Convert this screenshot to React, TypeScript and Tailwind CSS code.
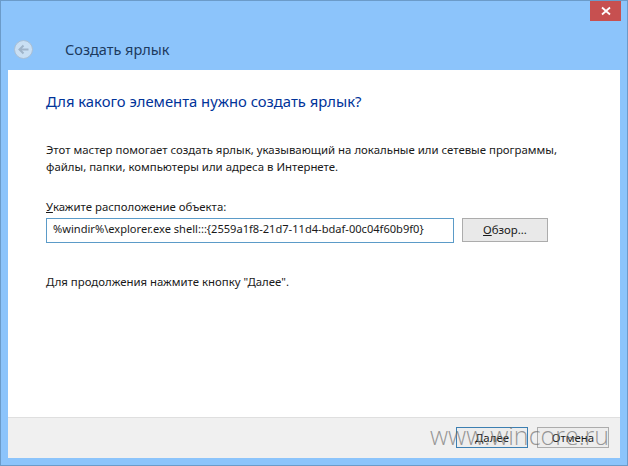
export default function App() {
  const font = { fontFamily: '"Noto Sans", "Open Sans", sans-serif' };
  return (
    <div style={font} className="relative w-[628px] h-[466px] overflow-hidden bg-[#8cc4fb] border border-[#6b9bc9] flex flex-col">
      <div className="flex justify-end h-[20px] pr-[6px]">
        <div className="w-[31px] h-[20px] bg-[#c75050] flex items-center justify-center">
          <svg width="10" height="10" viewBox="0 0 10 10"><path d="M1 1.5 L9 8.5 M9 1.5 L1 8.5" stroke="#fff" strokeWidth="1.8" /></svg>
        </div>
      </div>
      <div className="h-[49px] flex items-center pl-[13px] pt-[7px]">
        <svg width="19" height="19" viewBox="0 0 19 19">
          <circle cx="9.5" cy="9.5" r="9" fill="#c9dff3" stroke="#a9bfd4" />
          <path d="M14.5 9.5 H6 M9.5 5.5 L5.5 9.5 L9.5 13.5" fill="none" stroke="#9fb4c9" strokeWidth="2" />
        </svg>
        <span className="ml-[32px] text-[14.5px] leading-[20px] text-[#1c3a5e]">Создать ярлык</span>
      </div>
      <div className="mx-[7px] flex-1 bg-white flex flex-col min-h-0">
        <div className="flex-1 pl-[38px] pt-[20px] border-b border-[#dfdfdf]">
          <h1 className="text-[14.8px] leading-[22px] font-normal text-[#003399]">Для какого элемента нужно создать ярлык?</h1>
          <p className="mt-[29px] text-[11.4px] leading-[17px] text-[#1a1a1a] w-[530px]">
            Этот мастер помогает создать ярлык, указывающий на локальные или сетевые программы, файлы, папки, компьютеры или адреса в Интернете.
          </p>
          <p className="mt-[24px] text-[11.4px] leading-[16px] text-[#1a1a1a]">
            <span className="underline">У</span>кажите расположение объекта:
          </p>
          <div className="mt-[3px] flex items-start gap-[8px]">
            <div className="w-[408px] h-[25px] border border-[#5b9bc8] pl-[6px] pb-[3px] flex items-center text-[11.1px] text-[#1a1a1a] whitespace-nowrap">
              %windir%\explorer.exe shell:::{"{"}2559a1f8-21d7-11d4-bdaf-00c04f60b9f0{"}"}
            </div>
            <button className="w-[86px] h-[24px] border border-[#acacac] bg-[#e9e9e9] text-[11.4px] text-[#1a1a1a]">
              <span className="underline">О</span>бзор...
            </button>
          </div>
          <p className="mt-[31px] text-[11.4px] leading-[16px] text-[#1a1a1a]">Для продолжения нажмите кнопку "Далее".</p>
        </div>
        <div className="h-[40px] shrink-0 bg-[#f0f0f0] flex items-start justify-end gap-[9px] pt-[9px] pr-[11px]">
          <button className="w-[72px] h-[21px] border border-[#3c7fb1] bg-[#ededed] text-[11.4px] text-[#1a1a1a]">
            <span className="underline">Д</span>алее
          </button>
          <button className="w-[72px] h-[21px] border border-[#acacac] bg-[#ededed] text-[11.4px] text-[#1a1a1a]">Отмена</button>
        </div>
      </div>
      <div className="h-[7px] shrink-0" />
      <div className="absolute left-[429px] top-[412px] text-[25px] leading-[44px] font-light text-[#6f6f6f]/70 whitespace-nowrap" style={{ fontFamily: '"Open Sans", sans-serif' }}>www.wincore.ru</div>
    </div>
  );
}
